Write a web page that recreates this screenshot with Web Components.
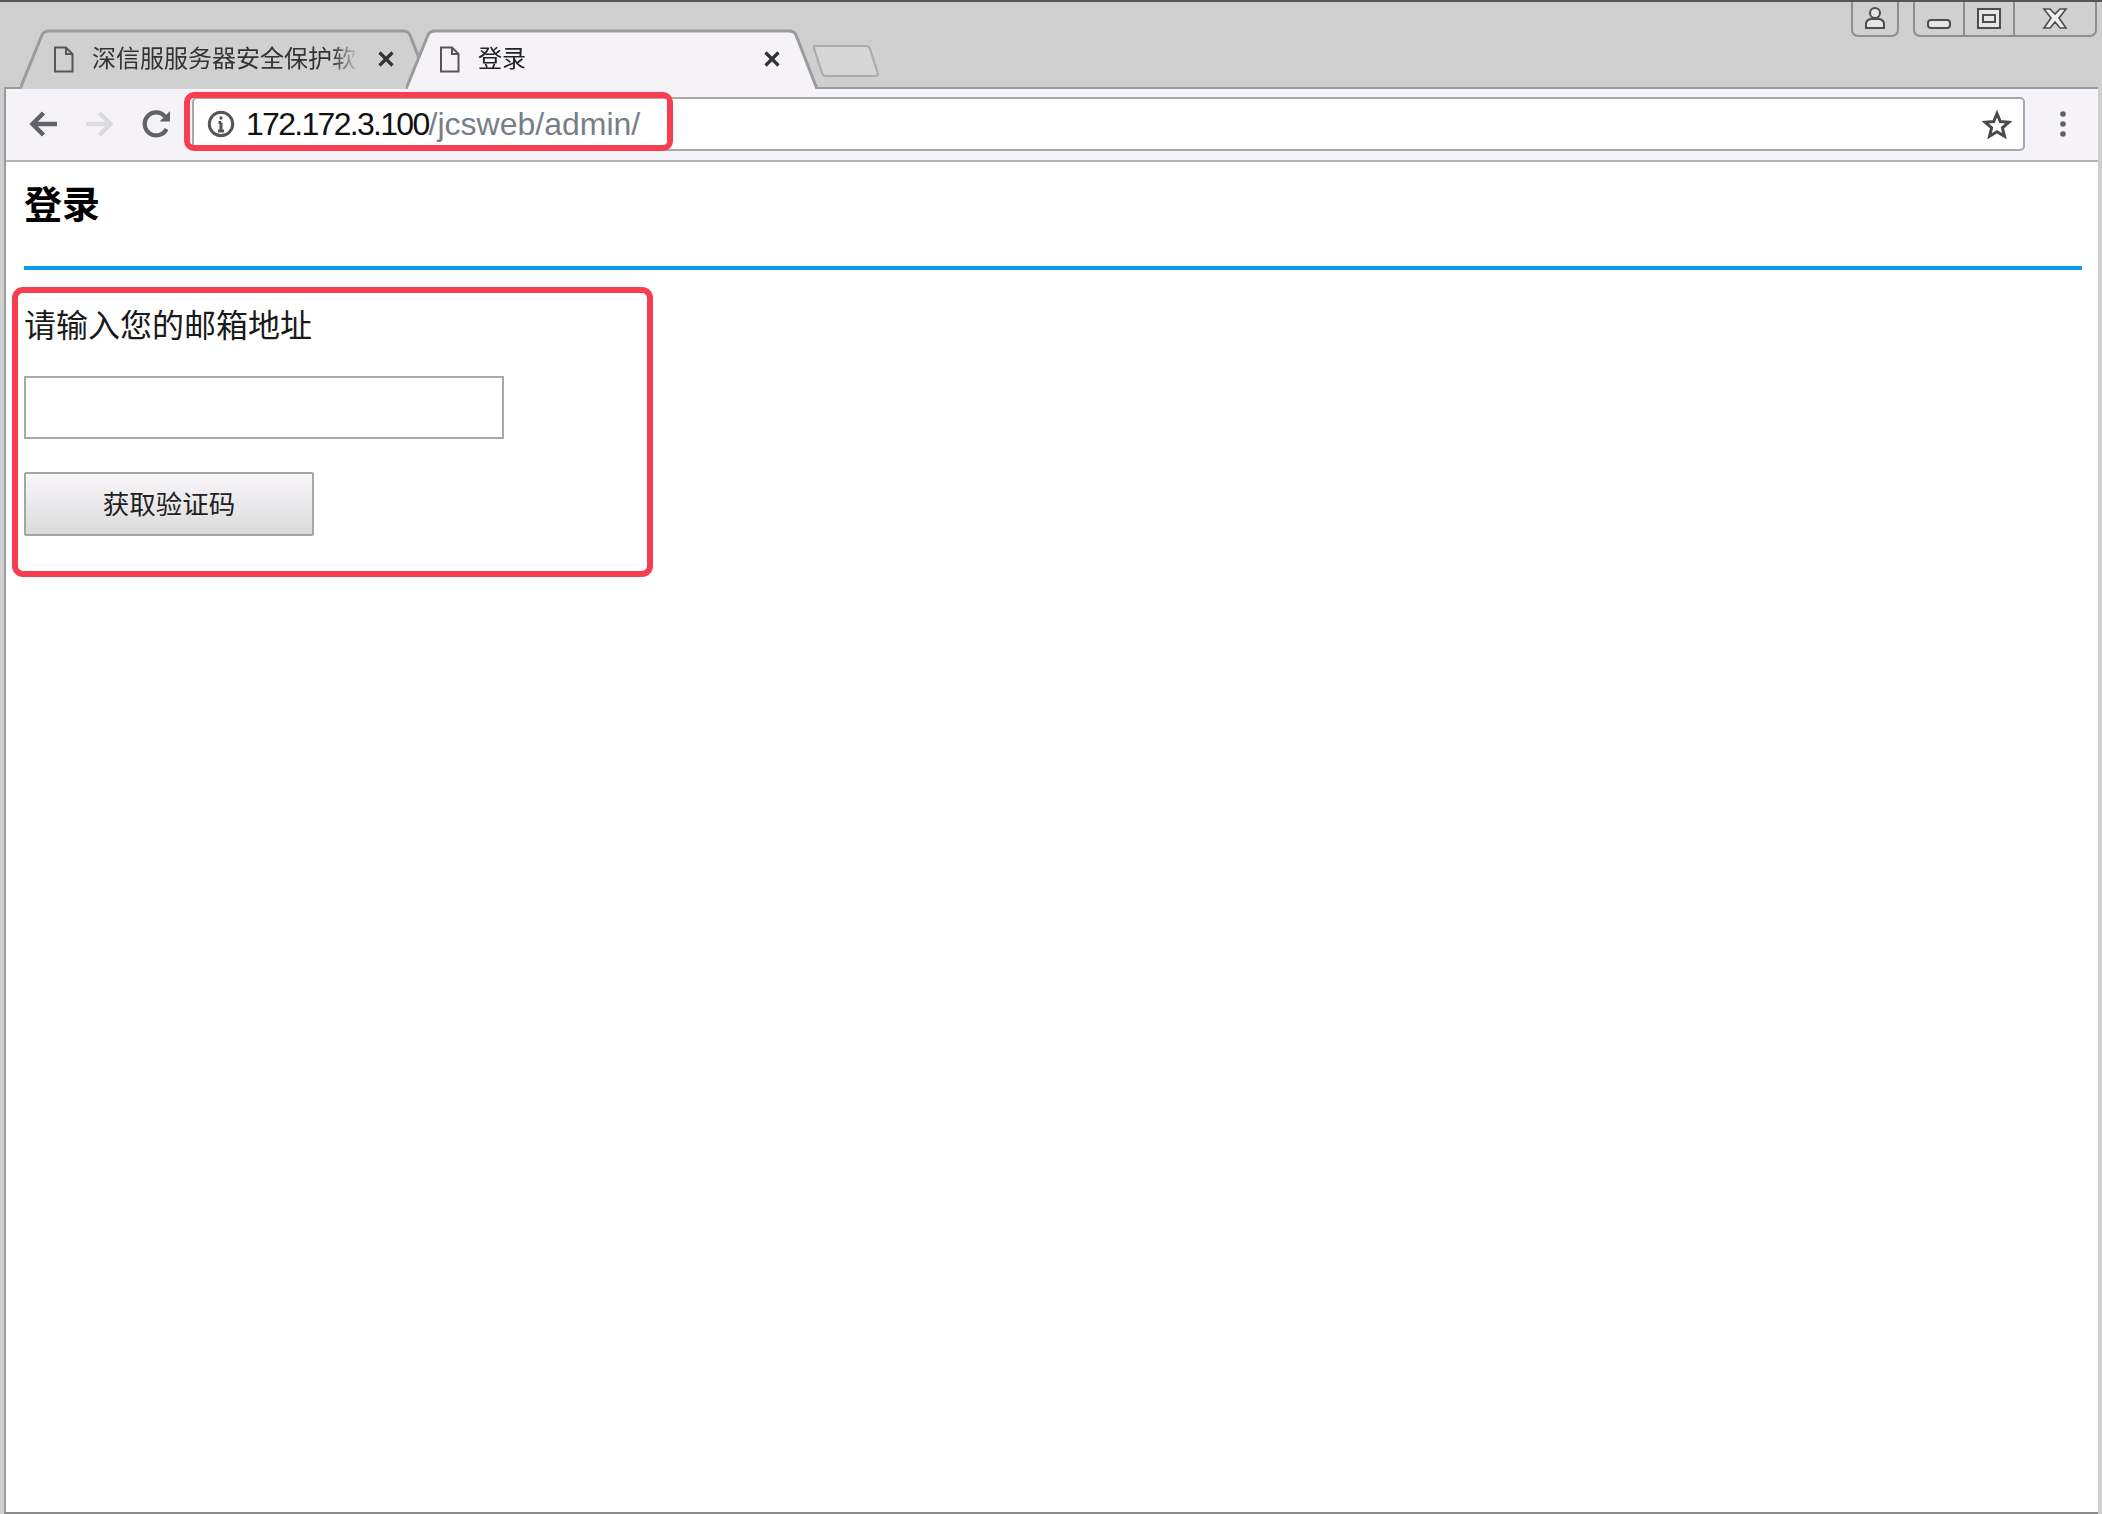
<!DOCTYPE html>
<html lang="zh">
<head>
<meta charset="utf-8">
<title>登录</title>
<style>
  html, body { margin: 0; padding: 0; background: #cfcfcf; }
</style>
</head>
<body>
<browser-window>
  <browser-tab slot="tabs">深信服服务器安全保护软件</browser-tab>
  <browser-tab slot="tabs" active>登录</browser-tab>
  <address-bar slot="address" host-part="172.172.3.100" path-part="/jcsweb/admin/"></address-bar>
  <login-page heading="登录" label="请输入您的邮箱地址" action="获取验证码"></login-page>
</browser-window>

<script>
const CJK = `"Liberation Sans", "Noto Sans CJK SC", sans-serif`;

function define(name, css, html, setup) {
  customElements.define(name, class extends HTMLElement {
    constructor() {
      super();
      this.attachShadow({ mode: "open" });
      this.shadowRoot.innerHTML = `<style>${css}</style>${html}`;
    }
    connectedCallback() {
      if (setup) setup(this, this.shadowRoot);
    }
  });
}

define("browser-tab", `
  :host {
    display: block;
    position: relative;
    width: 413px;
    height: 60px;
    margin: 0 0 -2px -27px;
    font: 24px ${CJK};
    color: #333;
  }
  :host(:first-child) { margin-left: 0; }
  :host([active]) { z-index: 2; color: #222; }
  .shape { position: absolute; inset: 0; width: 100%; height: 100%; }
  .shape path { fill: #d0d0d0; stroke: #9b9b9b; stroke-width: 3; }
  :host([active]) .shape path { fill: #f6f3f8; }
  .row {
    position: relative;
    height: 44px;
    padding: 8px 38px 0 33px;
    display: flex;
    align-items: center;
  }
  .file { flex: none; width: 21px; height: 27px; margin-right: 18px; }
  .label {
    flex: 1;
    white-space: nowrap;
    overflow: hidden;
    -webkit-mask-image: linear-gradient(to right, #000 90%, transparent);
    mask-image: linear-gradient(to right, #000 90%, transparent);
    line-height: 34px;
  }
  .close { flex: none; width: 18px; height: 16px; margin-left: 18px; }
`, `
  <svg class="shape" viewBox="0 0 413 60" preserveAspectRatio="none"><path d="M0 60 L22 6 Q24 2 29 2 L383 2 Q388 2 390 6 L411 60"/></svg>
  <div class="row">
    <svg class="file" viewBox="0 0 21 27" fill="none" stroke="#555" stroke-width="2"><path d="M2 1.5H13L19.500 8V25.500H2Z"/><path d="M13 1.500V8H19.500"/></svg>
    <span class="label"><slot></slot></span>
    <svg class="close" viewBox="0 0 18 16" fill="none" stroke="#333" stroke-width="3.200"><path d="M2.500 1.500L15.500 14.500M15.500 1.500L2.500 14.500"/></svg>
  </div>
`);

define("window-controls", `
  :host {
    display: flex;
    align-items: flex-start;
    gap: 14px;
    margin-top: 0;
  }
  .group {
    display: flex;
    height: 33px;
    border: 2px solid #8e8e8e;
    border-top: 0;
    border-radius: 0 0 7px 7px;
    background: #d0d0d0;
  }
  .group svg { display: block; width: 100%; height: 100%; }
  .cell { height: 33px; }
  .cell + .cell { border-left: 2px solid #8e8e8e; }
  .user { width: 44px; }
  .min { width: 48px; }
  .max { width: 48px; }
  .cls { width: 80px; }
`, `
  <div class="group">
    <div class="cell user"><svg viewBox="0 0 44 33" fill="#e6e6e6" stroke="#4d4d4d" stroke-width="2"><circle cx="22" cy="11" r="5"/><path d="M13 26V22Q13 18 18 17H26Q31 18 31 22V26Z"/></svg></div>
  </div>
  <div class="group">
    <div class="cell min"><svg viewBox="0 0 48 33" fill="#e6e6e6" stroke="#4d4d4d" stroke-width="2"><rect x="13" y="18" width="22" height="8" rx="3"/></svg></div>
    <div class="cell max"><svg viewBox="0 0 48 33" fill="#e6e6e6" stroke="#4d4d4d" stroke-width="2"><rect x="13" y="7" width="22" height="19"/><rect x="18" y="13" width="12" height="7"/></svg></div>
    <div class="cell cls"><svg viewBox="0 0 80 33" fill="#eee" stroke="#4d4d4d" stroke-width="1.600"><path d="M29 7H35L40 12L45 7H51L44 16L51 26H45L40 20L35 26H29L36 16Z"/></svg></div>
  </div>
`);

define("nav-toolbar", `
  :host {
    display: flex;
    align-items: center;
    height: 70px;
    padding-left: 23px;
    padding-bottom: 1px;
    background: #f6f3f8;
    border-top: 2px solid #9b9b9b;
    border-bottom: 2px solid #b4b4b4;
  }
  svg { display: block; flex: none; }
  .back { margin-right: 29px; }
  .forward { margin-right: 27px; }
  .reload { margin-right: 21px; }
  ::slotted(*) { flex: 1; }
  .menu { box-sizing: border-box; width: 73px; display: flex; justify-content: center; padding-left: 3px; }
`, `
  <svg class="back" width="28" height="26" viewBox="0 0 28 26" fill="none" stroke="#5f6368" stroke-width="4.500"><path d="M28 13H4M14.500 2L3.500 13L14.500 24"/></svg>
  <svg class="forward" width="28" height="26" viewBox="0 0 28 26" fill="none" stroke="#dcdcdc" stroke-width="4.500"><path d="M0 13H24M13.500 2L24.500 13L13.500 24"/></svg>
  <svg class="reload" width="30" height="28" viewBox="0 0 30 28" fill="none" stroke="#5f6368" stroke-width="4.200"><path d="M25.500 19A11.500 11.500 0 1 1 24 6.500"/><path d="M29 1V11.500H18.500Z" fill="#5f6368" stroke="none"/></svg>
  <slot></slot>
  <div class="menu">
    <svg width="6" height="26" viewBox="0 0 6 26" fill="#5f6368"><circle cx="3" cy="3" r="2.800"/><circle cx="3" cy="13" r="2.800"/><circle cx="3" cy="23" r="2.800"/></svg>
  </div>
`);

define("address-bar", `
  :host {
    display: flex;
    align-items: center;
    position: relative;
    box-sizing: border-box;
    height: 54px;
    padding: 0 11px 0 13px;
    background: #fff;
    border: 2px solid #a9a9a9;
    border-radius: 5px;
    font: 32px ${CJK};
    color: #777e88;
  }
  .info { flex: none; width: 28px; height: 28px; margin-right: 11px; }
  .url { flex: 1; white-space: nowrap; }
  b { font-weight: 400; color: #111; letter-spacing: -1.700px; }
  .star { flex: none; width: 30px; height: 29px; }
  .mark {
    position: absolute;
    left: -10px;
    top: -7px;
    width: 489px;
    height: 59px;
    box-sizing: border-box;
    border: 6px solid #f73e50;
    border-radius: 10px;
  }
`, `
  <svg class="info" viewBox="0 0 28 28" fill="none" stroke="#555" stroke-width="3"><circle cx="14" cy="14" r="11.700"/><path d="M14 12.500V21M11 21H17M11.500 12.500H14"/><circle cx="14" cy="8" r="1.700" fill="#555" stroke="none"/></svg>
  <span class="url"><b id="h"></b><span id="p"></span></span>
  <svg class="star" viewBox="0 0 30 29" fill="none" stroke="#4a4a4a" stroke-width="3"><path d="M15 3.500L18.300 11.500L27 12.200L20.400 17.800L22.500 26.300L15 21.800L7.500 26.300L9.600 17.800L3 12.200L11.700 11.500Z"/></svg>
  <div class="mark"></div>
`, (el, root) => {
  root.getElementById("h").textContent = el.getAttribute("host-part");
  root.getElementById("p").textContent = el.getAttribute("path-part");
});

define("login-page", `
  :host {
    display: block;
    flex: 1;
    background: #fff;
    padding: 18px 16px 0 18px;
    font-family: ${CJK};
    color: #1a1a1a;
  }
  h1 {
    margin: 0;
    padding-bottom: 36px;
    border-bottom: 4px solid #0a9bee;
    font-size: 38px;
    line-height: 50px;
    font-weight: 700;
    color: #000;
  }
  form {
    box-sizing: border-box;
    display: flex;
    flex-direction: column;
    align-items: flex-start;
    width: 641px;
    margin: 17px 0 0 -12px;
    padding: 11px 6px 35px;
    border: 6px solid #f73e50;
    border-radius: 11px;
  }
  label { font-size: 32px; line-height: 44px; }
  input {
    box-sizing: border-box;
    width: 480px;
    height: 63px;
    margin-top: 28px;
    border: 2px solid #a9a9a9;
    background: #fff;
    outline: none;
  }
  button {
    box-sizing: border-box;
    width: 290px;
    height: 64px;
    margin-top: 33px;
    padding: 0 0 3px;
    border: 2px solid #a5a5a5;
    border-radius: 2px;
    background: linear-gradient(#f8f6f9, #dcdbdc);
    font: 26.500px ${CJK};
    color: #222;
  }
`, `
  <h1 id="t"></h1>
  <form onsubmit="return false">
    <label id="l" for="mail"></label>
    <input id="mail" type="text">
    <button id="b" type="button"></button>
  </form>
`, (el, root) => {
  root.getElementById("t").textContent = el.getAttribute("heading");
  root.getElementById("l").textContent = el.getAttribute("label");
  root.getElementById("b").textContent = el.getAttribute("action");
});

define("browser-window", `
  :host {
    display: flex;
    flex-direction: column;
    box-sizing: border-box;
    height: 1514px;
    padding: 0 4px 0 4px;
    border-top: 2px solid #555;
    background: #cfcfcf;
    overflow: hidden;
  }
  .strip {
    display: flex;
    height: 85px;
    flex: none;
  }
  .tabs { display: flex; align-items: flex-end; padding-left: 16px; }
  .newtab { flex: none; width: 68px; height: 34px; margin: 0 0 9px -7px; align-self: flex-end; }
  .space { flex: 1; }
  .frame {
    flex: 1;
    display: flex;
    flex-direction: column;
    min-height: 0;
    border-left: 2px solid #9b9b9b;
    border-bottom: 2px solid #8a8a8a;
  }
  window-controls { margin-right: 1px; }
`, `
  <div class="strip">
    <div class="tabs"><slot name="tabs"></slot></div>
    <svg class="newtab" viewBox="0 0 68 34"><path d="M2 2H54Q57 2 58 5L66 30Q66 32 63 32H14Q11 32 10 29L2 4Z" fill="#d6d6d6" stroke="#ababab" stroke-width="2"/></svg>
    <div class="space"></div>
    <window-controls></window-controls>
  </div>
  <div class="frame">
    <nav-toolbar><slot name="address"></slot></nav-toolbar>
    <slot></slot>
  </div>
`);
</script>
</body>
</html>
